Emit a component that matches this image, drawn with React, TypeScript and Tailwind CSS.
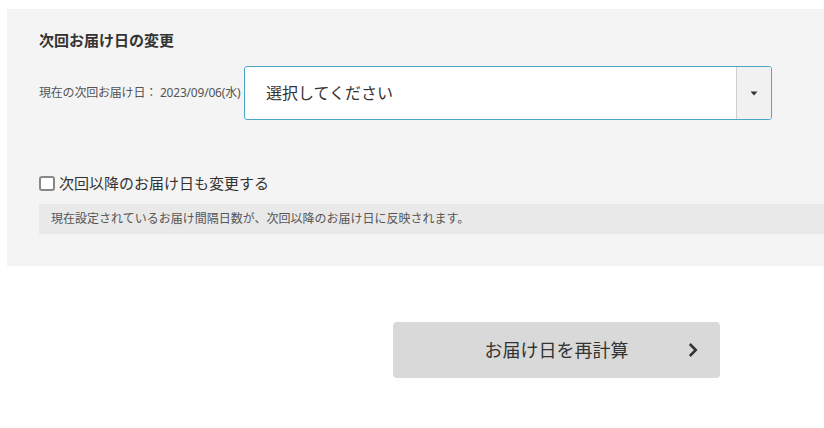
import React from "react";

export default function App() {
  return (
    <div
      className="w-[824px] h-[428px] overflow-hidden bg-white text-[#333]"
      style={{ fontFamily: '"Noto Sans", "Noto Sans CJK JP", sans-serif' }}
    >
      <div className="mt-[9px] ml-[7px] w-[840px] bg-[#f4f4f4] pl-[32px] pt-[21px] pb-[32px]">
        <h2 className="text-[15px] leading-[20px] font-bold text-[#333]">次回お届け日の変更</h2>
        <div className="mt-[16px] flex items-center">
          <div className="w-[205px] whitespace-nowrap text-[12px] leading-[16px] tracking-[-0.2px] text-[#555]">
            現在の次回お届け日： 2023/09/06(水)
          </div>
          <div className="flex h-[54px] w-[528px] overflow-hidden rounded-[3px] border border-[#4aa8c6] bg-white">
            <div className="flex flex-1 items-center pl-[21px] text-[16px] text-[#333]">選択してください</div>
            <div className="flex w-[35px] items-center justify-center border-l border-[#cfcfcf] bg-[#f1f1f1]">
              <svg width="8" height="5" viewBox="0 0 8 5">
                <path d="M0.5 0.5 L7.5 0.5 L4 4.5 Z" fill="#333" />
              </svg>
            </div>
          </div>
        </div>
        <label className="mt-[53px] flex items-center gap-[4px] text-[15px] leading-[20px] text-[#333]">
          <span className="block h-[15px] w-[16px] rounded-[3px] border-2 border-[#888] bg-white" />
          次回以降のお届け日も変更する
        </label>
        <div className="mt-[11px] flex h-[30px] items-center bg-[#e9e9e9] px-[12px] text-[12px] text-[#555]">
          現在設定されているお届け間隔日数が、次回以降のお届け日に反映されます。
        </div>
      </div>
      <div className="mt-[56px] ml-[393px] relative flex h-[56px] w-[327px] items-center justify-center rounded-[4px] bg-[#d9d9d9] text-[18px] text-[#333]">
        お届け日を再計算
        <svg className="absolute right-[22px] top-1/2 -translate-y-1/2" width="10" height="15" viewBox="0 0 10 15">
          <path d="M1.8 1.5 L7.8 7.5 L1.8 13.5" fill="none" stroke="#333" strokeWidth="2.5" />
        </svg>
      </div>
    </div>
  );
}
